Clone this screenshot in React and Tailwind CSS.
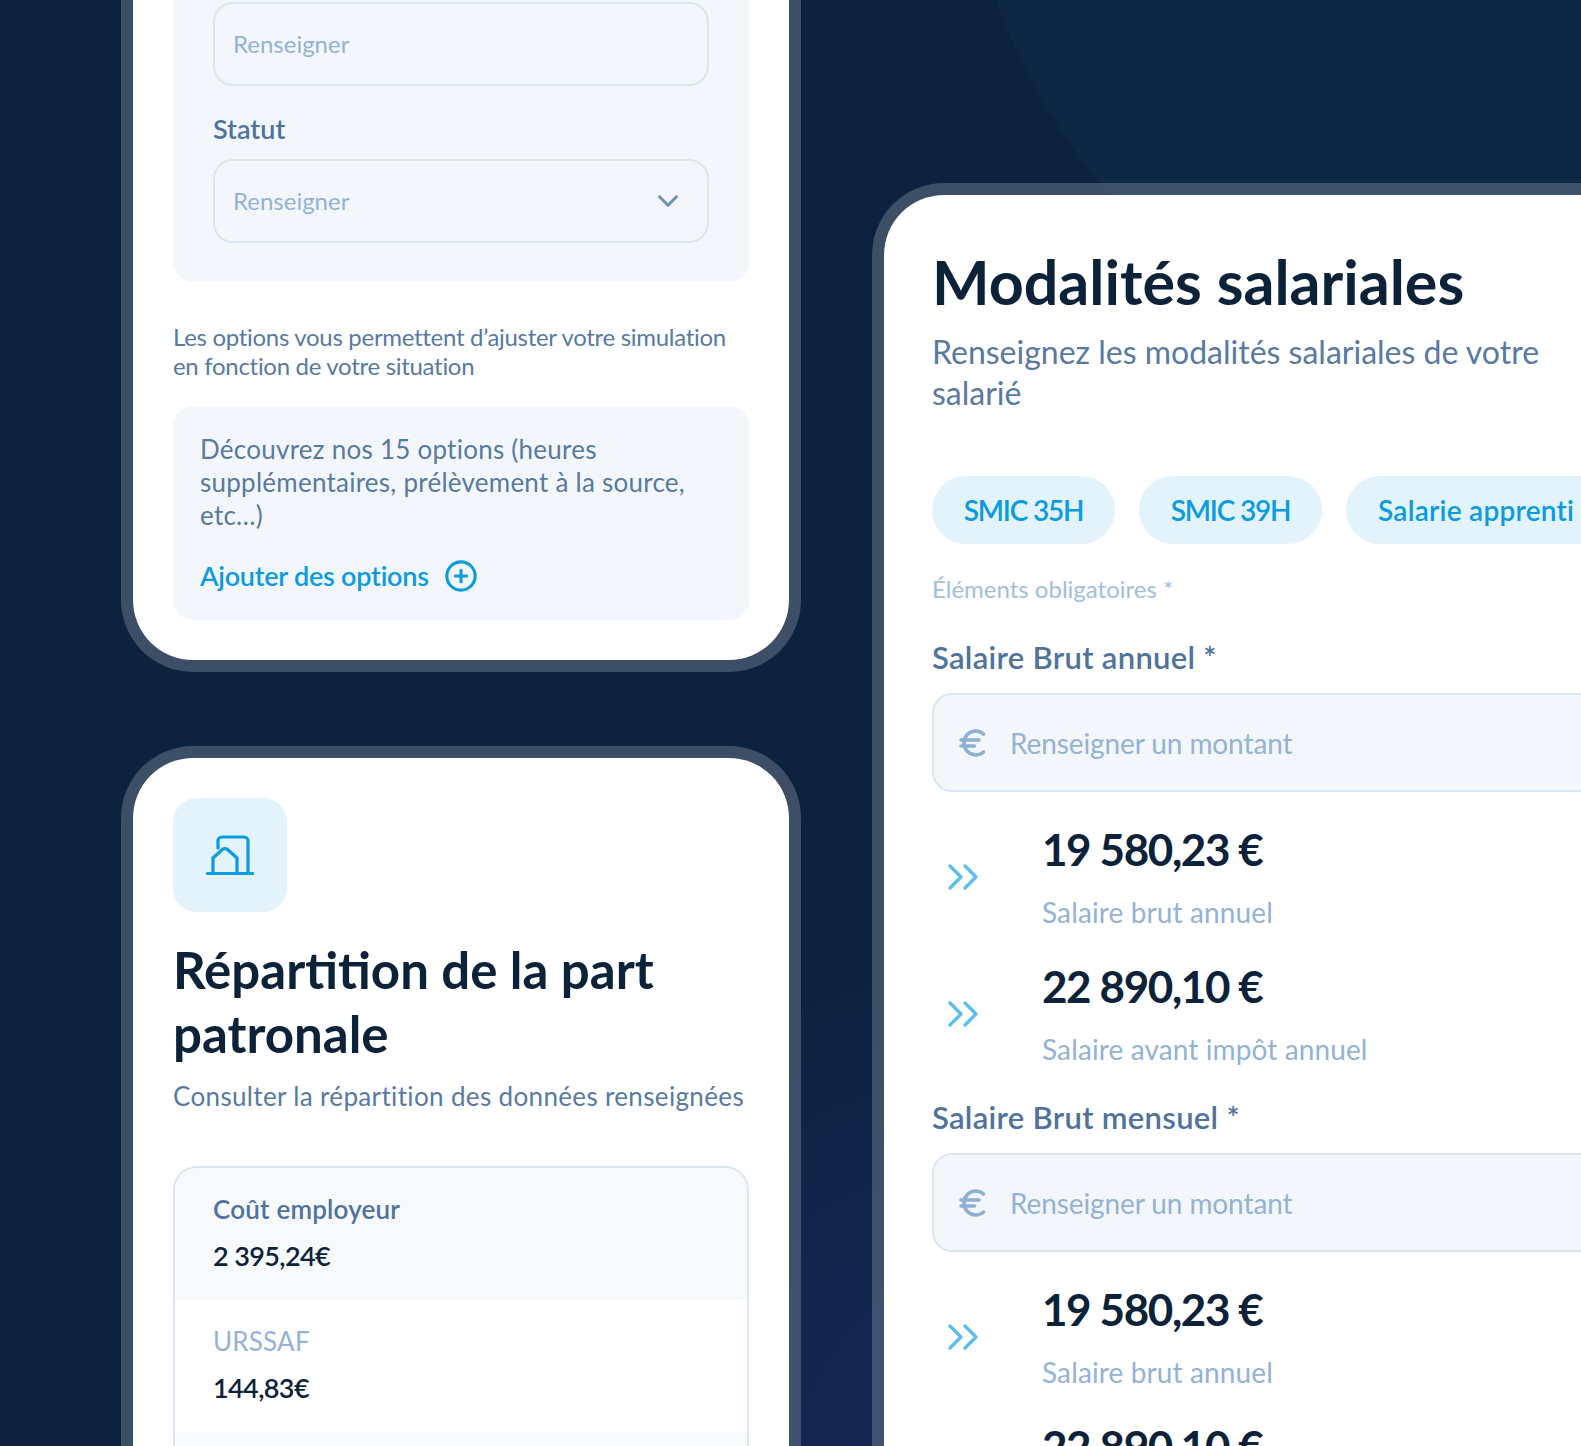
import { ChevronDown, CirclePlus, Euro } from 'lucide-react'

const font = { fontFamily: 'Lato, "Noto Sans", sans-serif' }

function PlainInput({ children }) {
  return (
    <div className="flex h-[84px] items-center justify-between rounded-[20px] border-2 border-[#dbe6f2] bg-[#f3f7fb] pl-[18px] pr-[22px] text-[24px] leading-[30px] text-[#93b2d4]">
      <span>Renseigner</span>
      {children}
    </div>
  )
}

function AmountInput() {
  return (
    <div className="mt-[18px] flex h-[99px] items-center gap-[19px] rounded-l-[20px] border-2 border-r-0 border-[#dbe6f2] bg-[#f3f7fb] pl-[21px] text-[28px] leading-[34px] tracking-[-0.1px] text-[#93b2d4]">
      <Euro size={36} strokeWidth={2.4} className="text-[#8fb0d3]" />
      <span>Renseigner un montant</span>
    </div>
  )
}

function Chevrons() {
  return (
    <svg width="32" height="26" viewBox="0 0 32 26" fill="none" stroke="#5bbcef" strokeWidth="3.2" strokeLinecap="round" strokeLinejoin="round" className="shrink-0">
      <path d="M3 2l11 11L3 24" />
      <path d="M18 2l11 11-11 11" />
    </svg>
  )
}

function Result({ value, label, className }) {
  return (
    <div className={`flex items-center gap-[63px] pl-[15px] ${className}`}>
      <Chevrons />
      <div className="-mt-[2px]">
        <div className="text-[44px] font-bold leading-[52px] tracking-[-1.4px] text-[#0b2239]">{value}</div>
        <div className="mt-[20px] text-[28px] leading-[34px] tracking-[0.12px] text-[#93b2d4]">{label}</div>
      </div>
    </div>
  )
}

function TableRow({ label, value, labelClass, className }) {
  return (
    <div className={`h-[132px] pl-[38px] pt-[25px] ${className}`}>
      <div className={`text-[26px] leading-[32px] tracking-[0.2px] ${labelClass}`}>{label}</div>
      <div className="mt-[15px] text-[27px] font-semibold leading-[32px] tracking-[-0.6px] text-[#0b2239]">{value}</div>
    </div>
  )
}

function Pill({ children, className }) {
  return (
    <div className={`flex h-[68px] shrink-0 items-center rounded-[34px] bg-[#e3f3fb] text-[28px] font-semibold text-[#0a9be0] ${className}`}>
      {children}
    </div>
  )
}

export default function App() {
  return (
    <div
      style={font}
      className="relative flex h-[1446px] w-[1581px] overflow-hidden bg-[#0b2239] bg-[radial-gradient(ellipse_700px_500px_at_1120px_1446px,#17295a_0%,#0c2340_100%)]"
    >
      {/* lighter disc behind the right card */}
      <div className="absolute left-[962px] top-[-803px] h-[1206px] w-[1206px] rounded-full bg-[#0c2845]" />

      <div className="relative ml-[121px] w-[680px] shrink-0">
        <section className="rounded-b-[72px] border-x-12 border-b-12 border-white/20 bg-white bg-clip-padding px-[40px] pb-[40px]">
          <div className="rounded-b-[20px] bg-[#f3f7fb] px-[40px] pb-[39px] pt-[2px]">
            <PlainInput />
            <div className="mb-[14px] mt-[27px] text-[27px] font-semibold leading-[32px] text-[#4f739b]">Statut</div>
            <PlainInput>
              <ChevronDown size={34} strokeWidth={2.2} className="text-[#6f93ba]" />
            </PlainInput>
          </div>
          <p className="mt-[40px] text-[24px] leading-[29px] tracking-[-0.3px] text-[#587a9f]">
            Les options vous permettent d’ajuster votre simulation
            <br />
            en fonction de votre situation
          </p>
          <div className="mt-[26px] rounded-[20px] bg-[#f3f7fb] px-[27px] pb-[27px] pt-[27px]">
            <p className="text-[26px] leading-[33px] tracking-[0.25px] text-[#587a9f]">
              Découvrez nos 15 options (heures
              <br />
              supplémentaires, prélèvement à la source,
              <br />
              etc…)
            </p>
            <div className="mt-[27px] flex items-center gap-[15px] text-[27px] font-semibold leading-[34px] tracking-[-0.25px] text-[#0a9be0]">
              <span>Ajouter des options</span>
              <CirclePlus size={34} strokeWidth={2.2} />
            </div>
          </div>
        </section>

        <section className="mt-[74px] rounded-t-[72px] border-x-12 border-t-12 border-white/20 bg-white bg-clip-padding px-[40px] pt-[40px]">
          <div className="flex h-[114px] w-[114px] items-center justify-center rounded-[24px] bg-[#e3f3fb]">
            <svg width="48" height="40" viewBox="0 0 48 40" fill="none" stroke="#0a9be0" strokeWidth="3.2" strokeLinecap="round" strokeLinejoin="round">
              <path d="M1.5 38.5h45" />
              <path d="M12 13V6a4 4 0 0 1 4-4h22a4 4 0 0 1 4 4v32.5" />
              <path d="M7 38.5V23l10-9 2-.5 2 .5 10 9v15.5" />
            </svg>
          </div>
          <h2 className="mt-[26px] text-[51px] font-bold leading-[64px] text-[#0b2239]">
            Répartition de la part
            <br />
            patronale
          </h2>
          <p className="mt-[13px] text-[26px] leading-[34px] tracking-[0.35px] text-[#587a9f]">Consulter la répartition des données renseignées</p>
          <div className="mt-[53px] h-[320px] overflow-hidden rounded-t-[24px] border-2 border-b-0 border-[#dbe6f2]">
            <TableRow label="Coût employeur" value="2 395,24€" labelClass="font-semibold text-[#4f739b]" className="bg-[#f7f9fb]" />
            <TableRow label="URSSAF" value="144,83€" labelClass="text-[#93b2d4]" className="bg-white" />
            <div className="h-[60px] bg-[#f7f9fb]" />
          </div>
        </section>
      </div>

      <section className="relative ml-[71px] mt-[183px] w-[800px] shrink-0 self-start rounded-tl-[72px] border-l-12 border-t-12 border-white/20 bg-white bg-clip-padding pl-[48px] pt-[51px]">
        <h1 className="text-[61px] font-bold leading-[72px] text-[#0b2239]">Modalités salariales</h1>
        <p className="mt-[13px] text-[32px] leading-[41px] text-[#587a9f]">
          Renseignez les modalités salariales de votre
          <br />
          salarié
        </p>
        <div className="mt-[63px] flex gap-[24px]">
          <Pill className="w-[183px] justify-center tracking-[-1.2px]">SMIC 35H</Pill>
          <Pill className="w-[183px] justify-center tracking-[-1.2px]">SMIC 39H</Pill>
          <Pill className="w-[300px] pl-[32px] tracking-[0.25px]">Salarie apprenti</Pill>
        </div>
        <div className="mt-[30px] text-[24px] leading-[30px] text-[#a3bedb]">Éléments obligatoires *</div>

        <div className="mt-[35px] text-[31px] font-semibold leading-[36px] tracking-[0.3px] text-[#4f739b]">Salaire Brut annuel *</div>
        <AmountInput />
        <Result value="19 580,23 €" label="Salaire brut annuel" className="mt-[33px]" />
        <Result value="22 890,10 €" label="Salaire avant impôt annuel" className="mt-[33px]" />

        <div className="mt-[33px] text-[31px] font-semibold leading-[36px] tracking-[0.3px] text-[#4f739b]">Salaire Brut mensuel *</div>
        <AmountInput />
        <Result value="19 580,23 €" label="Salaire brut annuel" className="mt-[33px]" />
        <Result value="22 890,10 €" label="Salaire avant impôt annuel" className="mt-[33px]" />
      </section>
    </div>
  )
}
